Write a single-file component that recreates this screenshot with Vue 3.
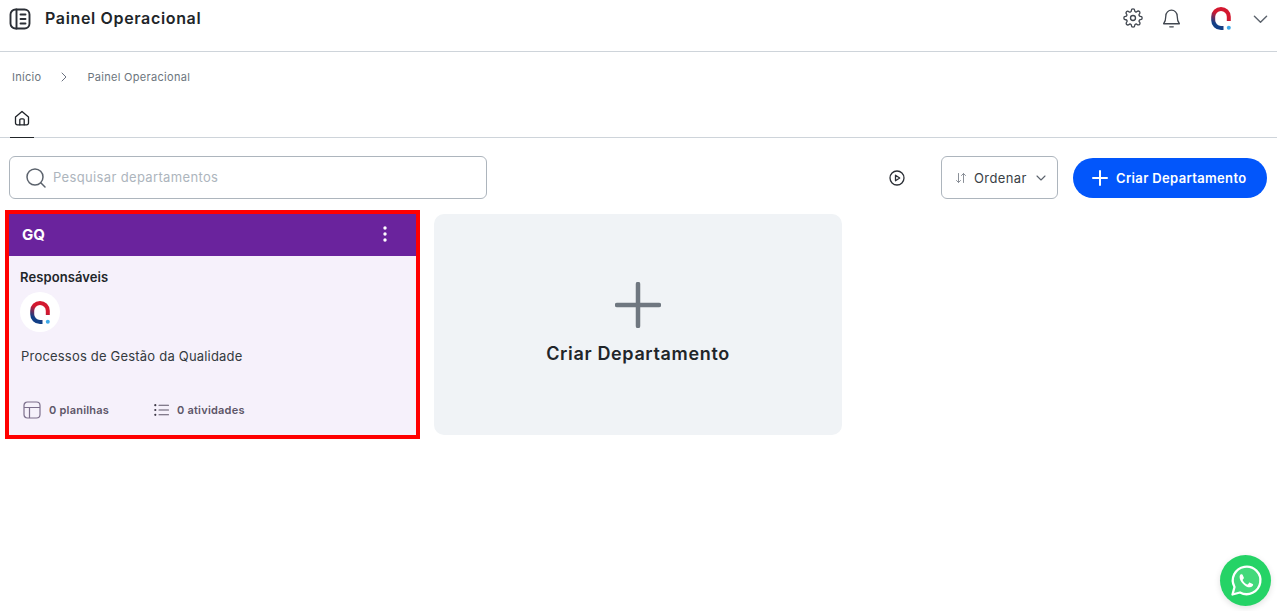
<template>
  <div class="page">
    <header class="topbar">
      <div class="topbar-left">
        <svg class="menu-icon" width="24" height="24" viewBox="0 0 24 24" fill="none" stroke="#2b2f36" stroke-width="1.9" stroke-linecap="round" stroke-linejoin="round">
          <rect x="2.500" y="2.500" width="19" height="19" rx="5" />
          <path d="M8.500 2.500v19" />
          <path d="M12.500 7.500h5M12.500 12h5M12.500 16.500h5" />
        </svg>
        <h1 class="title">Painel Operacional</h1>
      </div>
      <div class="topbar-right">
        <svg class="gear" width="20" height="20" viewBox="0 0 24 24" fill="none" stroke="#414750" stroke-width="1.600" stroke-linecap="round" stroke-linejoin="round">
          <circle cx="12" cy="12" r="3" />
          <path d="M19.400 15a1.650 1.650 0 0 0 .33 1.820l.06.06a2 2 0 1 1-2.830 2.830l-.06-.06a1.650 1.650 0 0 0-2.800 1.170V21a2 2 0 0 1-4 0v-.09a1.650 1.650 0 0 0-2.800-1.170l-.06.06a2 2 0 1 1-2.830-2.830l.06-.06a1.650 1.650 0 0 0-1.170-2.800H3a2 2 0 0 1 0-4h.09a1.650 1.650 0 0 0 1.170-2.800l-.06-.06a2 2 0 1 1 2.830-2.830l.06.06a1.650 1.650 0 0 0 1.820.33h.09A1.650 1.650 0 0 0 10 3.090V3a2 2 0 0 1 4 0v.09a1.650 1.650 0 0 0 2.800 1.170l.06-.06a2 2 0 1 1 2.830 2.830l-.06.06a1.650 1.650 0 0 0-.33 1.820v.09a1.650 1.650 0 0 0 1.510 1H21a2 2 0 0 1 0 4h-.09a1.650 1.650 0 0 0-1.510 1z" />
        </svg>
        <svg class="bell" width="21" height="21" viewBox="0 0 24 24" fill="none" stroke="#414750" stroke-width="1.500" stroke-linecap="round" stroke-linejoin="round">
          <path d="M12 2.500a6.500 6.500 0 0 0-6.500 6.500c0 5-1.200 7.300-2.500 9h18c-1.300-1.700-2.500-4-2.500-9A6.500 6.500 0 0 0 12 2.500z" />
          <path d="M10 21.500h4" />
        </svg>
        <svg class="logo" width="20" height="23" viewBox="0 0 20 23" fill="none">
          <defs>
            <linearGradient id="logoGrad" x1="0.7" y1="0" x2="0.25" y2="1">
              <stop offset="0.35" stop-color="#d3182f" />
              <stop offset="0.85" stop-color="#123f86" />
            </linearGradient>
          </defs>
          <path d="M17.800 14V9.800A7.800 7.800 0 0 0 2.200 9.800V13.200A7.800 7.800 0 0 0 10 21H12.500" stroke="url(#logoGrad)" stroke-width="4" />
          <circle cx="17.800" cy="20.800" r="2" fill="#3fa9e8" />
        </svg>
        <svg class="caret" width="15" height="15" viewBox="0 0 16 16" fill="none" stroke="#5c636d" stroke-width="1.500" stroke-linecap="round" stroke-linejoin="round">
          <path d="M1.500 4.500 8 11l6.500-6.500" />
        </svg>
      </div>
    </header>

    <nav class="breadcrumb">
      <span>Início</span>
      <svg width="8" height="10" viewBox="0 0 8 10" fill="none" stroke="#6b7280" stroke-width="1" stroke-linecap="round" stroke-linejoin="round">
        <path d="M2 1l4 4-4 4" />
      </svg>
      <span>Painel Operacional</span>
    </nav>

    <div class="tabs">
      <div class="tab">
        <svg width="16" height="16" viewBox="0 0 16 16" fill="none" stroke="#1f2329" stroke-width="1.300" stroke-linecap="round" stroke-linejoin="round">
          <path d="M1.500 7 8 1.500 14.500 7v6a1.800 1.800 0 0 1-1.800 1.800H3.300A1.800 1.800 0 0 1 1.500 13z" />
          <path d="M5.800 14.800V10a1.200 1.200 0 0 1 1.200-1.200h2A1.200 1.200 0 0 1 10.200 10v4.800" />
        </svg>
      </div>
    </div>

    <div class="toolbar">
      <label class="search">
        <svg width="22" height="22" viewBox="0 0 22 22" fill="none" stroke="#5c636d" stroke-width="1.500" stroke-linecap="round">
          <circle cx="10" cy="10" r="8" />
          <path d="m16 16 4 4" />
        </svg>
        <input type="text" placeholder="Pesquisar departamentos" />
      </label>
      <div class="toolbar-actions">
        <svg class="play" width="16" height="16" viewBox="0 0 16 16" fill="none" stroke="#2b2f36" stroke-width="1.300" stroke-linejoin="round">
          <circle cx="8" cy="8" r="7" />
          <path d="M6.500 5.200v5.600L10.700 8z" />
        </svg>
        <button class="sort" type="button">
          <svg width="12" height="12" viewBox="0 0 12 12" fill="none" stroke="#8b9098" stroke-width="1" stroke-linecap="round" stroke-linejoin="round">
            <path d="M3.500 1.500v9M1.500 8.500l2 2 2-2M8.500 10.500v-9M6.500 3.500l2-2 2 2" />
          </svg>
          <span>Ordenar</span>
          <svg class="sort-caret" width="12" height="12" viewBox="0 0 12 12" fill="none" stroke="#5c636d" stroke-width="1.100" stroke-linecap="round" stroke-linejoin="round">
            <path d="M2 4l4 4 4-4" />
          </svg>
        </button>
        <button class="create" type="button">
          <svg width="16" height="16" viewBox="0 0 16 16" fill="none" stroke="#fff" stroke-width="2" stroke-linecap="round">
            <path d="M8 1v14M1 8h14" />
          </svg>
          <span>Criar Departamento</span>
        </button>
      </div>
    </div>

    <section class="cards">
      <article v-for="dep in departments" :key="dep.sigla" class="card">
        <div class="card-head">
          <span class="sigla">{{ dep.sigla }}</span>
          <svg width="4" height="16" viewBox="0 0 4 16" fill="#fff">
            <circle cx="2" cy="2" r="1.700" />
            <circle cx="2" cy="8" r="1.700" />
            <circle cx="2" cy="14" r="1.700" />
          </svg>
        </div>
        <div class="card-body">
          <div class="resp-label">Responsáveis</div>
          <div class="avatar">
            <svg width="20" height="23" viewBox="0 0 20 23" fill="none">
              <path d="M17.800 14V9.800A7.800 7.800 0 0 0 2.200 9.800V13.200A7.800 7.800 0 0 0 10 21H12.500" stroke="url(#logoGrad)" stroke-width="4" />
              <circle cx="17.800" cy="20.800" r="2" fill="#3fa9e8" />
            </svg>
          </div>
          <p class="desc">{{ dep.descricao }}</p>
          <div class="stats">
            <span class="stat stat-sheets">
              <svg width="18" height="18" viewBox="0 0 18 18" fill="none" stroke="#7c6f8c" stroke-width="1.200" stroke-linejoin="round">
                <rect x="1" y="1" width="16" height="16" rx="3.500" />
                <path d="M1 6.500h16M6.500 6.500V17" />
              </svg>
              {{ dep.planilhas }} planilhas
            </span>
            <span class="stat">
              <svg width="15" height="12" viewBox="0 0 15 12" fill="none" stroke="#5d5668" stroke-width="1.100" stroke-linecap="round">
                <path d="M5 1.200h9.500M5 6h9.500M5 10.800h9.500" />
                <circle cx="1.300" cy="1.200" r="1.100" fill="#3e3a48" stroke="none" />
                <circle cx="1.300" cy="6" r="1.100" fill="#3e3a48" stroke="none" />
                <circle cx="1.300" cy="10.800" r="1.100" fill="#3e3a48" stroke="none" />
              </svg>
              {{ dep.atividades }} atividades
            </span>
          </div>
        </div>
      </article>

      <button class="new-card" type="button">
        <svg width="46" height="46" viewBox="0 0 46 46" fill="none" stroke="#6f7780" stroke-width="4.500" stroke-linecap="round">
          <path d="M23 2v42M2 23h42" />
        </svg>
        <span>Criar Departamento</span>
      </button>
    </section>

    <a class="whatsapp" href="#" @click.prevent>
      <svg width="34" height="34" viewBox="0 0 34 34" fill="none">
        <path d="M3.500 30.500 5.500 23A13.800 13.800 0 1 1 11 28.500z" stroke="#fff" stroke-width="2.300" stroke-linejoin="round" fill="rgba(255,255,255,0.14)" />
        <path d="M12.600 9.700c-.9.300-2 1.500-2 3.200 0 4.300 5.600 10.400 10.200 10.400 1.800 0 3.100-1.200 3.300-2.300.1-.6-.1-.8-.5-1l-2.600-1.300c-.4-.2-.7-.1-1 .2l-1 1.300c-.3.300-.5.300-.9.200-2-.8-3.500-2.300-4.400-4.200-.1-.3-.1-.6.200-.8l.8-1c.2-.3.2-.5.100-.8l-1.100-2.700c-.2-.5-.6-.5-1.100-.2z" fill="#fff" />
      </svg>
    </a>
  </div>
</template>

<script setup>
import { ref } from 'vue';

const departments = ref([
  { sigla: 'GQ', descricao: 'Processos de Gestão da Qualidade', planilhas: 0, atividades: 0 }
]);
</script>

<style>
html, body { margin: 0; background: #fff; overflow: hidden; }
</style>

<style scoped>
.page {
  position: relative;
  height: 611px;
  font-family: Inter, "Liberation Sans", sans-serif;
  color: #212529;
  box-sizing: border-box;
}

.topbar {
  height: 52px;
  box-sizing: border-box;
  border-bottom: 1px solid #ced4da;
  display: flex;
  justify-content: space-between;
  padding: 7px 9px 0 8px;
}
.topbar-left { display: flex; align-items: flex-start; gap: 13px; }
.title {
  margin: 0;
  font-size: 16px;
  line-height: 22px;
  letter-spacing: 0.65px;
  font-weight: 600;
  color: #212529;
}
.topbar-right { display: flex; align-items: flex-start; padding-top: 1px; }
.gear { margin-right: 18px; }
.bell { margin-right: 29px; }
.logo { margin: -1px 22px 0 0; }
.caret { margin-top: 4px; }

.breadcrumb {
  display: flex;
  align-items: center;
  gap: 19px;
  height: 17px;
  margin-top: 16px;
  padding-left: 12px;
  font-size: 11px;
  letter-spacing: 0.3px;
  color: #6c757d;
}

.tabs {
  margin-top: 17px;
  height: 36px;
  box-sizing: border-box;
  border-bottom: 1px solid #ced4da;
  padding-left: 10px;
}
.tab {
  width: 24px;
  height: 36px;
  box-sizing: border-box;
  border-bottom: 1px solid #212529;
  display: flex;
  justify-content: center;
  padding-top: 8px;
}

.toolbar {
  display: flex;
  justify-content: space-between;
  margin-top: 18px;
  padding: 0 10px 0 9px;
}
.search {
  width: 478px;
  height: 43px;
  box-sizing: border-box;
  border: 1px solid #adb5bd;
  border-radius: 6px;
  display: flex;
  align-items: center;
  gap: 4px;
  padding-left: 15px;
}
.search input {
  flex: 1;
  border: none;
  outline: none;
  background: transparent;
  font: inherit;
  font-size: 13px;
  letter-spacing: 0.35px;
  color: #212529;
  padding: 0 2px 2px;
}
.search input::placeholder { color: #adb5bd; opacity: 1; }

.toolbar-actions { display: flex; align-items: center; }
.play { margin-right: 36px; }
.sort {
  width: 117px;
  height: 43px;
  box-sizing: border-box;
  background: #fff;
  border: 1px solid #adb5bd;
  border-radius: 6px;
  display: flex;
  align-items: center;
  padding: 0 0 0 13px;
  font: inherit;
  font-size: 13px;
  letter-spacing: 0.4px;
  color: #3a3f46;
}
.sort span { margin-left: 7px; }
.sort-caret { margin-left: 8px; }
.create {
  margin-left: 15px;
  width: 194px;
  height: 40px;
  border: none;
  border-radius: 20px;
  background: #0256fb;
  color: #fff;
  display: flex;
  align-items: center;
  gap: 8px;
  padding: 0 0 0 19px;
  font: inherit;
  font-size: 13px;
  letter-spacing: 0.35px;
  font-weight: 600;
}

.cards {
  display: grid;
  grid-template-columns: 407px 408px;
  gap: 18px;
  margin-top: 15px;
  padding-left: 9px;
}
.card {
  height: 221px;
  background: #f6f1fb;
  outline: 4px solid #ff0000;
  display: flex;
  flex-direction: column;
}
.card-head {
  height: 42px;
  box-sizing: border-box;
  flex: none;
  background: #6a239d;
  color: #fff;
  display: flex;
  align-items: center;
  justify-content: space-between;
  padding: 0 29px 2px 13px;
}
.sigla { font-size: 15px; font-weight: 700; }
.card-body {
  flex: 1;
  display: flex;
  flex-direction: column;
  padding: 13px 11px 0 11px;
}
.resp-label { font-size: 13px; line-height: 17px; letter-spacing: 0.1px; font-weight: 600; color: #212529; }
.avatar {
  width: 40px;
  height: 40px;
  margin-top: 6px;
  border-radius: 50%;
  background: #fff;
  display: flex;
  align-items: center;
  justify-content: center;
}
.desc {
  margin: 15px 0 0 1px;
  font-size: 13px;
  line-height: 18px;
  letter-spacing: 0.2px;
  color: #343a40;
}
.stats {
  display: flex;
  align-items: center;
  margin-top: 36px;
  padding-left: 3px;
}
.stat {
  display: inline-flex;
  align-items: center;
  gap: 8px;
  font-size: 11px;
  letter-spacing: 0.22px;
  font-weight: 600;
  color: #5d5668;
}
.stat-sheets { width: 131px; }

.new-card {
  height: 221px;
  border: none;
  border-radius: 10px;
  background: #f0f3f6;
  display: flex;
  flex-direction: column;
  align-items: center;
  padding: 68px 0 0;
  font: inherit;
  font-size: 18px;
  letter-spacing: 0.65px;
  font-weight: 600;
  color: #212529;
}
.new-card span { margin-top: 15px; }

.whatsapp {
  position: absolute;
  right: 6px;
  bottom: 5px;
  width: 51px;
  height: 51px;
  border-radius: 50%;
  background: #25d366;
  box-shadow: 0 2px 6px rgba(0, 0, 0, 0.12);
  display: flex;
  align-items: center;
  justify-content: center;
}
</style>
